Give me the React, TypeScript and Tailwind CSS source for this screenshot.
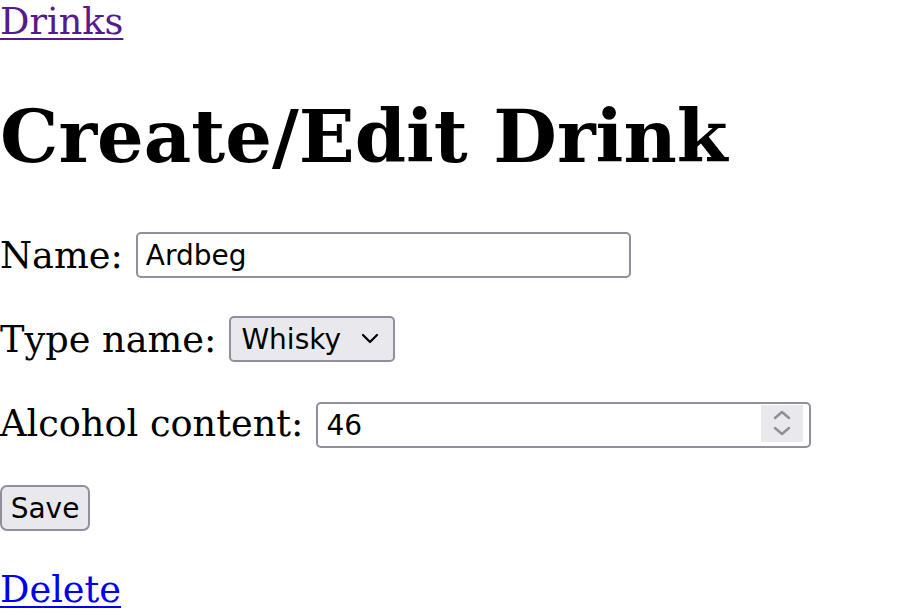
import React from "react";

export default function App() {
  return (
    <div className="min-h-[614px] bg-white font-['DejaVu_Serif',serif] text-[36.7px] leading-[43px] text-black">
      <a href="#" className="block w-fit text-[#551a8b] underline decoration-[2px] underline-offset-[4px]">
        Drinks
      </a>

      <h1 className="mt-[51px] text-[73.4px] font-bold leading-[85px]">Create/Edit Drink</h1>

      <form className="mt-[53px] flex flex-col gap-[38.3px]">
        <div className="flex h-[46px] items-center">
          <label className="mr-[13px]">Name:</label>
          <input
            defaultValue="Ardbeg"
            className="h-[46px] w-[495px] rounded-[5px] border-2 border-[#8f8f9d] bg-white px-[8px] font-['DejaVu_Sans',sans-serif] text-[28px] text-black outline-none"
          />
        </div>

        <div className="flex h-[46px] items-center">
          <label className="mr-[13px]">Type name:</label>
          <div className="flex h-[46px] w-[166px] items-center justify-between rounded-[5px] border-2 border-[#8f8f9d] bg-[#e9e9ed] pl-[10px] pr-[14px] font-['DejaVu_Sans',sans-serif] text-[28px]">
            <span>Whisky</span>
            <svg width="18" height="12" viewBox="0 0 18 12" fill="none">
              <path d="M2 2l7 7 7-7" stroke="#000" strokeWidth="2.2" strokeLinecap="round" strokeLinejoin="round" />
            </svg>
          </div>
        </div>

        <div className="flex h-[46px] items-center">
          <label className="mr-[13px]">Alcohol content:</label>
          <div className="relative h-[46px] w-[495px]">
            <input
              defaultValue="46"
              className="h-full w-full rounded-[5px] border-2 border-[#8f8f9d] bg-white px-[8px] font-['DejaVu_Sans',sans-serif] text-[28px] text-black outline-none"
            />
            <div className="absolute right-[8px] top-[4px] flex h-[37px] w-[42px] flex-col items-center justify-center gap-[6px] bg-[#e9e9ed]">
              <svg width="18" height="10" viewBox="0 0 18 10" fill="none">
                <path d="M2 8l7-6 7 6" stroke="#8f8f9d" strokeWidth="2.5" strokeLinecap="round" strokeLinejoin="round" />
              </svg>
              <svg width="18" height="10" viewBox="0 0 18 10" fill="none">
                <path d="M2 2l7 6 7-6" stroke="#8f8f9d" strokeWidth="2.5" strokeLinecap="round" strokeLinejoin="round" />
              </svg>
            </div>
          </div>
        </div>

        <div className="flex h-[46px] items-center">
          <button
            type="button"
            className="h-[46px] w-[90px] rounded-[7px] border-2 border-[#8f8f9d] bg-[#e9e9ed] font-['DejaVu_Sans',sans-serif] text-[28px] text-black"
          >
            Save
          </button>
        </div>
      </form>

      <a href="#" className="mt-[37px] block w-fit text-[#0000ee] underline decoration-[2px] underline-offset-[4px]">
        Delete
      </a>
    </div>
  );
}
